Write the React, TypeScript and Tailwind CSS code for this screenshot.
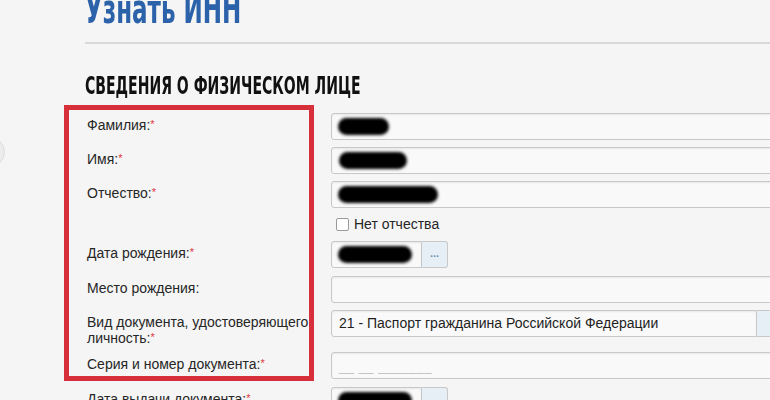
import React from "react";

// Required-field marker
function Req() {
  return <span className="relative top-[-2px] text-[11px] text-[#e0363d]">*</span>;
}

// Redacted value (blurred black blob)
function Blob({ w }: { w: string }) {
  return <div className={`h-[17px] rounded-full bg-black blur-[1.5px] ${w}`} />;
}

const field =
  "h-full border border-[#c8c8c8] rounded-[3px] bg-[#f9f9f9] shadow-[inset_0_1px_2px_rgba(0,0,0,0.07)] flex items-center";

function Row({
  label,
  className,
  children,
}: {
  label: React.ReactNode;
  className: string;
  children?: React.ReactNode;
}) {
  return (
    <div className={`flex ${className}`}>
      <div className="ml-[2px] w-[244px] shrink-0 pt-[4px] text-[14px] leading-[16px] text-[#262626]">
        {label}
      </div>
      <div className="h-full">{children}</div>
    </div>
  );
}

function DateField({ blob }: { blob?: boolean }) {
  return (
    <div className="flex h-full">
      <div className={`${field} w-[91px] rounded-r-none pl-[6px]`}>{blob && <Blob w="w-[74px]" />}</div>
      <div className="flex h-full w-[26px] items-center justify-center rounded-r-[3px] border border-l-0 border-[#c8c8c8] bg-[#e6eef6] pb-[3px] text-[11px] font-bold text-[#6f8db0]">
        ...
      </div>
    </div>
  );
}

export default function App() {
  return (
    <div className="relative h-[400px] w-[770px] overflow-hidden bg-[#f5f5f5] font-['Liberation_Sans',Arial,sans-serif]">
      {/* slider control peeking from the left edge */}
      <div className="absolute left-[-25px] top-[137px] h-[30px] w-[30px] rounded-full border border-[#dcdcdc] bg-[#ececec]" />

      <div className="pl-[85px]">
        <h1 className="mt-[-13px] inline-block origin-left scale-x-[0.64] font-['DejaVu_Sans_Condensed','DejaVu_Sans',sans-serif] text-[40px] font-bold leading-[44px] text-[#2c62a9] [font-stretch:condensed]">
          Узнать ИНН
        </h1>
        <div className="mt-[11px] h-[2px] bg-[#d9d9d9]" />
        <h2 className="mt-[30px] inline-block origin-left scale-x-[0.65] font-['DejaVu_Sans_Condensed','DejaVu_Sans',sans-serif] text-[24px] font-bold leading-[24px] text-[#111] [font-stretch:condensed]">
          СВЕДЕНИЯ О ФИЗИЧЕСКОМ ЛИЦЕ
        </h2>

        <div className="mt-[12px] flex flex-col">
          <Row className="h-[27px]" label={<>Фамилия:<Req /></>}>
            <div className={`${field} w-[460px] pl-[6px]`}>
              <Blob w="w-[51px]" />
            </div>
          </Row>
          <Row className="mt-[7px] h-[27px]" label={<>Имя:<Req /></>}>
            <div className={`${field} w-[460px] pl-[7px]`}>
              <Blob w="w-[68px]" />
            </div>
          </Row>
          <Row className="mt-[7px] h-[27px]" label={<>Отчество:<Req /></>}>
            <div className={`${field} w-[460px] pl-[6px]`}>
              <Blob w="w-[100px]" />
            </div>
          </Row>
          <div className="ml-[246px] mt-[8px] flex h-[16px] items-center text-[14px] text-[#262626]">
            <div className="ml-[5px] h-[13px] w-[13px] rounded-[2px] border border-[#9a9a9a] bg-white" />
            <span className="ml-[5px]">Нет отчества</span>
          </div>
          <Row className="mt-[9px] h-[27px]" label={<>Дата рождения:<Req /></>}>
            <DateField blob />
          </Row>
          <Row className="mt-[8px] h-[27px]" label="Место рождения:">
            <div className={`${field} w-[460px]`} />
          </Row>
          <Row
            className="mt-[7px] h-[27px]"
            label={
              <>
                Вид документа, удостоверяющего
                <br />
                личность:<Req />
              </>
            }
          >
            <div className="flex h-full">
              <div className={`${field} w-[426px] rounded-r-none pl-[7px] text-[14px] text-[#1e1e1e]`}>
                21 - Паспорт гражданина Российской Федерации
              </div>
              <div className="flex h-full w-[30px] items-center justify-center border border-l-0 border-[#c8c8c8] bg-[#e6eef6]">
                <svg width="10" height="7" viewBox="0 0 10 7" className="ml-[6px]">
                  <path d="M1 1.5 5 5.5 9 1.5" fill="none" stroke="#3c6493" strokeWidth="1.8" />
                </svg>
              </div>
            </div>
          </Row>
          <Row className="mt-[15px] h-[27px]" label={<>Серия и номер документа:<Req /></>}>
            <div className={`${field} w-[460px] pl-[7px] pt-[2px] text-[13px] tracking-[0.5px] text-[#bcbcbc]`}>
              __ __ _______
            </div>
          </Row>
          <Row className="mt-[8px] h-[27px]" label={<>Дата выдачи документа:<Req /></>}>
            <DateField blob />
          </Row>
        </div>
      </div>

      {/* highlight frame drawn over the labels */}
      <div className="absolute left-[64px] top-[105px] h-[276px] w-[250px] border-[5px] border-[#d8303b]" />
    </div>
  );
}
